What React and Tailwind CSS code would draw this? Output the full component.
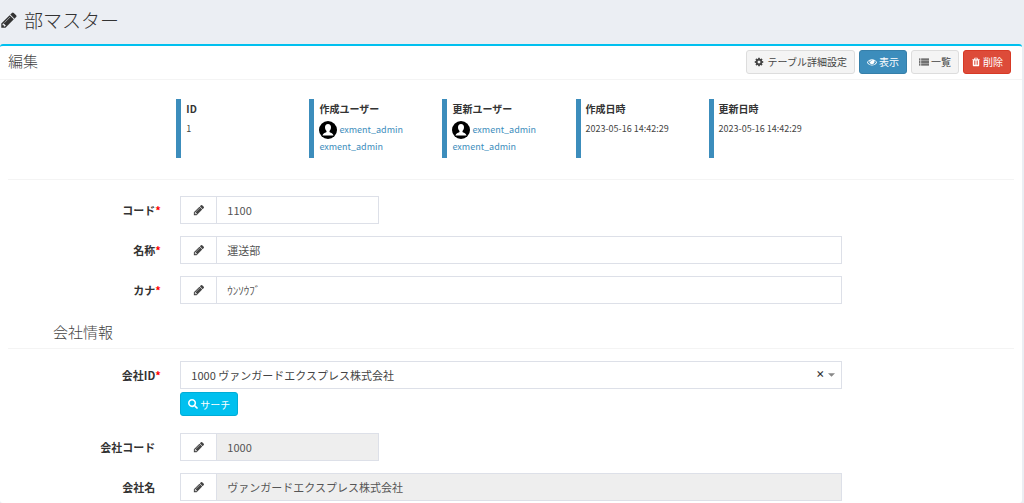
import React from 'react';
import { FaSearch } from 'react-icons/fa';

const PATHS = {
  pencil:
    'M491 1536l91-91-235-235-91 91v107h128v128h107zm523-928q0-22-22-22-10 0-17 7l-542 542q-7 7-7 17 0 22 22 22 10 0 17-7l542-542q7-7 7-17zm-54-192l416 416-832 832h-416v-416zm683 96q0 53-37 90l-166 166-416-416 166-165q36-38 90-38 53 0 91 38l235 234q37 39 37 91z',
  cog:
    'M1152 896q0-106-75-181t-181-75-181 75-75 181 75 181 181 75 181-75 75-181zm512-109v222q0 12-8 23t-20 13l-185 28q-19 54-39 91 35 50 107 138 10 12 10 25t-9 23q-27 37-99 108t-94 71q-12 0-26-9l-138-108q-44 23-91 38-16 136-29 186-7 28-36 28h-222q-14 0-24.5-8.5t-11.5-21.5l-28-184q-49-16-90-37l-141 107q-10 9-25 9-14 0-25-11-126-114-165-168-7-10-7-23 0-12 8-23 15-21 51-66.5t54-70.5q-27-50-41-99l-183-27q-13-2-21-12.5t-8-23.5v-222q0-12 8-23t19-13l186-28q14-46 39-92-40-57-107-138-10-12-10-24 0-10 9-23 26-36 98.5-107.5t94.5-71.5q13 0 26 10l138 107q44-23 91-38 16-136 29-186 7-28 36-28h222q14 0 24.5 8.5t11.5 21.5l28 184q49 16 90 37l142-107q9-9 24-9 13 0 25 10 129 119 165 170 7 8 7 22 0 12-8 23-15 21-51 66.5t-54 70.5q26 50 41 98l183 28q13 2 21 12.5t8 23.5z',
  eye:
    'M1664 960q-152-236-381-353 61 104 61 225 0 185-131.5 316.5t-316.5 131.5-316.5-131.5-131.5-316.5q0-121 61-225-229 117-381 353 133 205 333.5 326.5t434.5 121.5 434.5-121.5 333.5-326.5zm-720-384q0-20-14-34t-34-14q-125 0-214.5 89.5t-89.5 214.5q0 20 14 34t34 14 34-14 14-34q0-86 61-147t147-61q20 0 34-14t14-34zm848 384q0 34-20 69-140 230-376.5 368.5t-499.5 138.5-499.5-139-376.5-368q-20-35-20-69t20-69q140-229 376.5-368t499.5-139 499.5 139 376.5 368q20 35 20 69z',
  list:
    'M0 256h256v224H0zM0 608h256v224H0zM0 960h256v224H0zM0 1312h256v224H0zM384 256h1408v224H384zM384 608h1408v224H384zM384 960h1408v224H384zM384 1312h1408v224H384z',
  trash:
    'M704 1376v-704q0-14-9-23t-23-9h-64q-14 0-23 9t-9 23v704q0 14 9 23t23 9h64q14 0 23-9t9-23zm256 0v-704q0-14-9-23t-23-9h-64q-14 0-23 9t-9 23v704q0 14 9 23t23 9h64q14 0 23-9t9-23zm256 0v-704q0-14-9-23t-23-9h-64q-14 0-23 9t-9 23v704q0 14 9 23t23 9h64q14 0 23-9t9-23zm-544-992h448l-48-117q-7-9-17-11h-317q-10 2-17 11zm928 32v64q0 14-9 23t-23 9h-96v948q0 83-47 143.5t-113 60.5h-832q-66 0-113-58.5t-47-141.5v-952h-96q-14 0-23-9t-9-23v-64q0-14 9-23t23-9h309l70-167q15-37 54-63t79-26h320q40 0 79 26t54 63l70 167h309q14 0 23 9t9 23z',
};

const Icon = ({ name, className }) => (
  <svg viewBox="0 0 1792 1792" fill="currentColor" aria-hidden="true" className={className}>
    <path d={PATHS[name]} />
  </svg>
);

const Avatar = () => (
  <svg viewBox="0 0 36 36" aria-hidden="true" className="size-[18px] shrink-0">
    <circle cx="18" cy="18" r="18" fill="#000" />
    <path
      d="M18 6c-4 0-6 3-6 6.500 0 3.500 1.500 6 3 7.500v2c-1 1.500-7 2-8 7h22c-1-5-7-5.500-8-7v-2c1.500-1.500 3-4 3-7.500C24 9 22 6 18 6z"
      fill="#fff"
    />
  </svg>
);

const UserLinks = () => (
  <div className="text-[9px] leading-4 text-[#3c8dbc]">
    <a href="#user" className="flex items-center gap-0.5">
      <Avatar />
      exment_admin
    </a>
    <a href="#user">exment_admin</a>
  </div>
);

const Meta = ({ title, children }) => (
  <div className="h-[59px] border-l-[5px] border-[#3c8dbc] pl-[5px] pt-px">
    <h4 className="mb-[3px] text-[10px] font-bold leading-[18px]">{title}</h4>
    {children}
  </div>
);

const Row = ({ id, label, required, children }) => (
  <div className="mb-3 grid grid-cols-[2fr_8fr_2fr]">
    <label htmlFor={id} className="flex h-7 items-center justify-end pr-[9px] text-[11px] font-bold">
      {label}
      <span className="w-1.5 text-[#ff0000]">{required && '*'}</span>
    </label>
    <div className="px-2.5">{children}</div>
  </div>
);

const TextRow = ({ id, label, required, value, short, readOnly }) => (
  <Row id={id} label={label} required={required}>
    <div className={short ? 'flex h-7 w-[199px]' : 'flex h-7'}>
      <span className="flex w-9 shrink-0 items-center justify-center border border-r-0 border-[#dde0e8]">
        <Icon name="pencil" className="size-3 text-[#444]" />
      </span>
      <input
        id={id}
        type="text"
        defaultValue={value}
        readOnly={readOnly}
        className="min-w-0 flex-1 border border-[#dde0e8] px-2.5 text-[11px] text-[#555] read-only:bg-[#eeeeee]"
      />
    </div>
  </Row>
);

const BTN = 'flex h-6 items-center rounded-[3px] border px-[7px] text-[10px]';

const App = () => {
  return (
    <div className="min-h-screen bg-[#ebeef3] pr-0.5 font-['Noto_Sans_CJK_JP',sans-serif] text-[#333]">
      <header className="flex h-11 items-center gap-1.5 pb-1">
        <Icon name="pencil" className="size-[18px]" />
        <h1 className="text-[19px] font-light">部マスター</h1>
      </header>

      <main className="min-h-[459px] rounded-[3px] border-t-2 border-[#00c0ef] bg-white">
        <div className="flex h-[34px] items-center justify-between border-b border-[#f4f4f4] pb-0.5 pl-2 pr-[11px]">
          <h2 className="text-[15px] font-light text-[#444]">編集</h2>
          <div className="flex gap-1">
            <button type="button" className={`${BTN} gap-1 border-[#ddd] bg-[#f4f4f4] text-[#444]`}>
              <Icon name="cog" className="size-2.5" />
              テーブル詳細設定
            </button>
            <button type="button" className={`${BTN} gap-0.5 border-[#367fa9] bg-[#3c8dbc] text-white`}>
              <Icon name="eye" className="size-2.5" />
              表示
            </button>
            <button type="button" className={`${BTN} gap-0.5 border-[#ddd] bg-[#f4f4f4] text-[#444]`}>
              <Icon name="list" className="size-2.5" />
              一覧
            </button>
            <button type="button" className={`${BTN} gap-0.5 border-[#d73925] bg-[#dd4b39] text-white`}>
              <Icon name="trash" className="size-2.5" />
              削除
            </button>
          </div>
        </div>

        <div className="grid grid-cols-[2fr_8fr_2fr] pt-[19px]">
          <div className="col-start-2 grid grid-cols-5 pl-1.5 pr-2.5">
            <Meta title="ID">
              <p className="text-[9px] leading-4 text-[#444]">1</p>
            </Meta>
            <Meta title="作成ユーザー">
              <UserLinks />
            </Meta>
            <Meta title="更新ユーザー">
              <UserLinks />
            </Meta>
            <Meta title="作成日時">
              <p className="text-[9px] leading-4 text-[#444]">2023-05-16 14:42:29</p>
            </Meta>
            <Meta title="更新日時">
              <p className="text-[9px] leading-4 text-[#444]">2023-05-16 14:42:29</p>
            </Meta>
          </div>
        </div>

        <hr className="mx-2 mb-4 mt-[21px] border-[#f4f4f4]" />

        <form>
          <TextRow id="code" label="コード" required value="1100" short />
          <TextRow id="name" label="名称" required value="運送部" />
          <TextRow id="kana" label="カナ" required value="ｳﾝｿｳﾌﾞ" />

          <h3 className="ml-[53px] text-[15px] font-light leading-8 text-[#444]">会社情報</h3>
          <hr className="mx-2 mb-3 border-[#f4f4f4]" />

          <Row id="company" label="会社ID" required>
            <div className="relative">
              <select
                id="company"
                className="block h-7 w-full appearance-none border border-[#dde0e8] bg-white px-2.5 text-[11px] text-[#444]"
              >
                <option>1000 ヴァンガードエクスプレス株式会社</option>
              </select>
              <button
                type="button"
                aria-label="クリア"
                className="absolute inset-y-0 right-[17px] flex items-center text-[9px] font-black"
              >
                ×
              </button>
              <span className="pointer-events-none absolute inset-y-0 right-[7px] flex items-center">
                <svg viewBox="0 0 8 4" className="h-1 w-[7px]" fill="#888" aria-hidden="true">
                  <path d="M0 0h8L4 4z" />
                </svg>
              </span>
            </div>
            <button type="button" className={`${BTN} mb-[5px] mt-[3px] gap-0.5 border-[#00acd6] bg-[#00c0ef] text-white`}>
              <FaSearch className="size-2.5" />
              サーチ
            </button>
          </Row>

          <TextRow id="company_code" label="会社コード" value="1000" short readOnly />
          <TextRow id="company_name" label="会社名" value="ヴァンガードエクスプレス株式会社" readOnly />
        </form>
      </main>
    </div>
  );
};

export default App;
